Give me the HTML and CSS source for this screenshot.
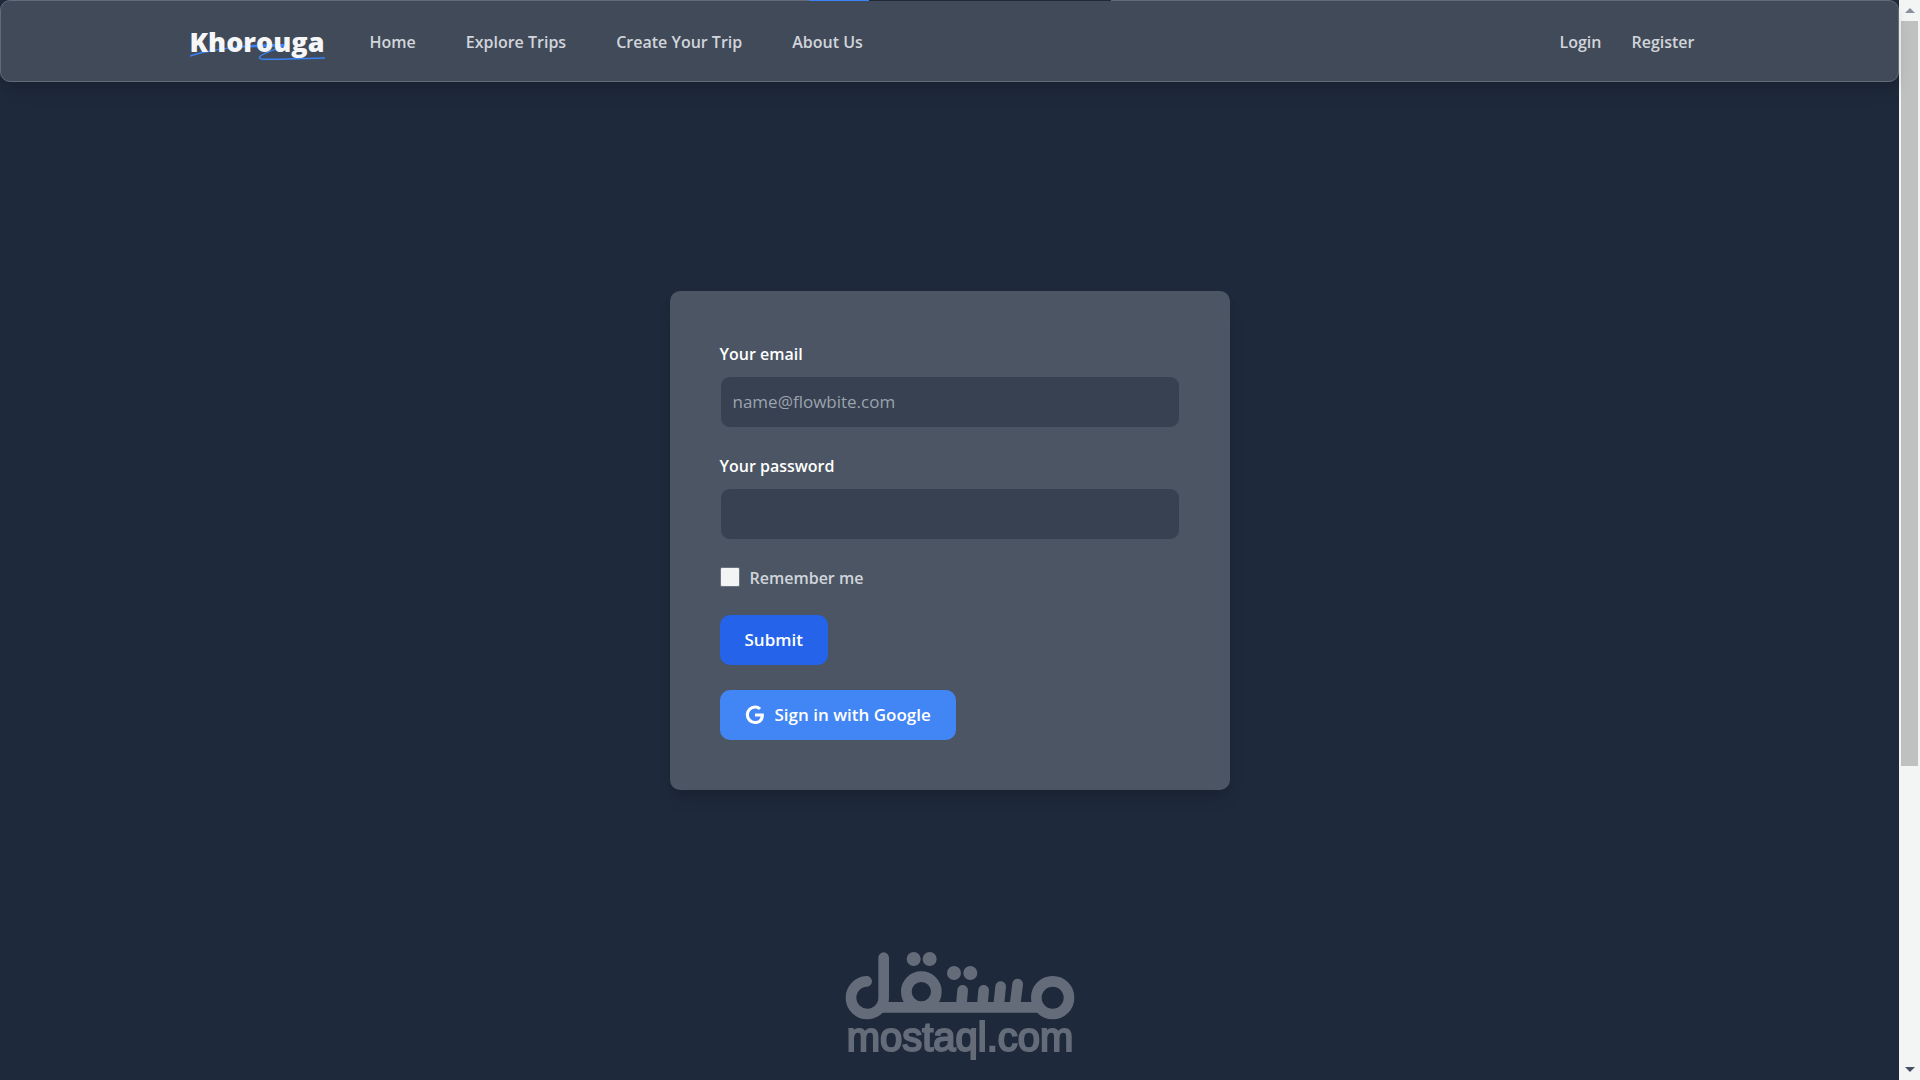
FILE: index.html
```html
<!DOCTYPE html>
<html lang="en">
<head>
    <meta charset="UTF-8">
    <meta name="viewport" content="width=device-width, initial-scale=1.0">
    <title>Khorouga</title>
    <link rel="stylesheet" href="styles.css">
</head>
<body>
    <div class="page">
        <header class="navbar">
            <div class="progress"></div>
            <nav class="nav-container">
                <a href="#" class="logo">
                    <svg class="logo-line" viewBox="0 0 132 18" preserveAspectRatio="none" aria-hidden="true">
                        <path d="M0 14 C22 7 58 3 96 3 C84 5 66 4 44 5 M40 6 C60 3 78 2 94 3 C86 7 70 11 68 15 C67 19 78 17 132 16"/>
                    </svg>
                    <span class="logo-text">Khorouga</span>
                </a>
                <ul class="nav-links">
                    <li><a href="#">Home</a></li>
                    <li><a href="#">Explore Trips</a></li>
                    <li><a href="#">Create Your Trip</a></li>
                    <li><a href="#">About Us</a></li>
                </ul>
                <div class="nav-auth">
                    <a href="#">Login</a>
                    <a href="#">Register</a>
                </div>
            </nav>
        </header>

        <main class="content">
            <form class="login-card">
                <div class="field">
                    <label for="email">Your email</label>
                    <input type="email" id="email" placeholder="name@flowbite.com" required>
                </div>
                <div class="field">
                    <label for="password">Your password</label>
                    <input type="password" id="password" required>
                </div>
                <div class="remember">
                    <input type="checkbox" id="remember">
                    <label for="remember">Remember me</label>
                </div>
                <button type="submit" class="btn btn-submit">Submit</button>
                <button type="button" class="btn btn-google">
                    <svg viewBox="0 0 18 19" aria-hidden="true">
                        <path fill-rule="evenodd" d="M8.842 18.083a8.8 8.8 0 0 1-8.65-8.948 8.841 8.841 0 0 1 8.8-8.652h.153a8.464 8.464 0 0 1 5.7 2.257l-2.193 2.038A5.27 5.27 0 0 0 9.09 3.4a5.882 5.882 0 0 0-.2 11.76h.124a5.091 5.091 0 0 0 5.248-4.057L14.3 11H9V8h8.34c.066.543.095 1.09.088 1.636-.086 5.053-3.463 8.449-8.4 8.449l-.186-.002Z"/>
                    </svg>
                    Sign in with Google
                </button>
            </form>
        </main>
    </div>

    <div class="scrollbar" aria-hidden="true">
        <div class="arrow arrow-up"></div>
        <div class="thumb"></div>
        <div class="arrow arrow-down"></div>
    </div>

    <!-- Watermark -->
    <div class="watermark">
        <svg viewBox="0 0 690 204" aria-hidden="true">
            <g fill="none" stroke-width="32" stroke-linecap="round">
                <path d="M65 88 A49 49 0 1 0 116 136 V17"/>
                <path d="M110 166 H580"/>
                <circle cx="229" cy="119" r="45"/>
                <circle cx="623" cy="137" r="49"/>
                <path d="M353 115 L349 160 M416 115 L412 160 M467 104 L461 160 M518 96 L510 160"/>
            </g>
            <g stroke="none">
                <circle cx="206" cy="21" r="21"/>
                <circle cx="254" cy="21" r="21"/>
                <circle cx="327" cy="63" r="21"/>
                <circle cx="376" cy="63" r="21"/>
            </g>
        </svg>
        <span>mostaql.com</span>
    </div>
</body>
</html>
```

FILE: styles.css
```css
* {
    box-sizing: border-box;
}
body {
    margin: 0;
    min-height: 100vh;
    display: flex;
    background-color: #1e293b;
    color: #d1d5db;
    font-family: "Open Sans", "Noto Sans", sans-serif;
    font-size: 16px;
    line-height: 27px;
}
a {
    color: inherit;
    text-decoration: none;
}
.page {
    flex: 1;
    display: flex;
    flex-direction: column;
}

/* Navbar */
.navbar {
    position: relative;
    padding: 21px 40px 19px;
    background-color: #414a59;
    border: 1px solid #636b78;
    border-radius: 10px;
    box-shadow: 0 12px 18px -4px rgba(0, 0, 0, 0.1), 0 5px 8px -2px rgba(0, 0, 0, 0.1);
}
.progress {
    position: absolute;
    top: -1px;
    left: 50%;
    width: 302px;
    height: 1px;
    margin-left: -141px;
    background: linear-gradient(to right, #3b82f6 20%, #1f2937 20%);
}
.nav-container {
    display: flex;
    align-items: center;
    max-width: 1520px;
    min-height: 40px;
    margin: 0 auto;
    font-weight: 600;
}
.logo {
    position: relative;
    margin-right: 45px;
    color: #f5f6f7;
    font-size: 27px;
    font-weight: 800;
    line-height: 40px;
}
.logo-line {
    position: absolute;
    left: 0;
    bottom: 2px;
    width: 100%;
    height: 18px;
    fill: none;
    stroke: #3b82f6;
    stroke-width: 1.5;
}
.logo-text {
    position: relative;
}
.nav-links {
    display: flex;
    gap: 50px;
    margin: 0;
    padding: 0;
    list-style: none;
}
.nav-auth {
    display: flex;
    gap: 30px;
    margin-left: auto;
    padding-right: 15px;
}

/* Login form */
.content {
    flex: 1;
    display: flex;
    align-items: center;
    justify-content: center;
    padding-bottom: 82px;
}
.login-card {
    display: flex;
    flex-direction: column;
    align-items: flex-start;
    gap: 25px;
    width: 100%;
    max-width: 560px;
    padding: 50px;
    background-color: #4b5563;
    border-radius: 10px;
    box-shadow: 0 12px 18px -4px rgba(0, 0, 0, 0.1), 0 5px 8px -2px rgba(0, 0, 0, 0.1);
}
.field {
    display: flex;
    flex-direction: column;
    gap: 8px;
    width: 100%;
    color: #fff;
    font-weight: 600;
}
.field input {
    width: 100%;
    height: 52px;
    padding: 0 12px;
    background-color: #374151;
    border: 1px solid #4b5563;
    border-radius: 10px;
    color: #fff;
    font: inherit;
    font-size: 17px;
    font-weight: 400;
}
.field input::placeholder {
    color: #9ca3af;
    opacity: 1;
}
.remember {
    display: flex;
    gap: 10px;
    height: 25px;
    font-weight: 600;
}
.remember input {
    appearance: none;
    width: 20px;
    height: 20px;
    margin: 2px 0;
    background-color: #f3f5f5;
    border: 1px solid #6b7280;
    border-radius: 2px;
}
.btn {
    display: flex;
    align-items: center;
    gap: 10px;
    height: 50px;
    padding: 0 25px;
    border: none;
    border-radius: 10px;
    color: #fff;
    font: inherit;
    font-size: 17px;
    font-weight: 600;
    cursor: pointer;
}
.btn-submit {
    background-color: #2563eb;
}
.btn-google {
    background-color: #4285f4;
}
.btn-google svg {
    width: 20px;
    height: 20px;
    fill: currentColor;
}

/* Scrollbar column */
.scrollbar {
    display: flex;
    flex-direction: column;
    align-items: center;
    width: 21px;
    background-color: #f3f5f5;
}
.thumb {
    width: 17px;
    height: 69%;
    background-color: #bfc1c1;
}
.arrow {
    display: flex;
    align-items: center;
    justify-content: center;
    height: 21px;
}
.arrow::before {
    content: "";
    border: 5px solid transparent;
}
.arrow-up::before {
    border-top: none;
    border-bottom-color: #8b8f9b;
}
.arrow-down {
    margin-top: auto;
}
.arrow-down::before {
    border-bottom: none;
    border-top-color: #475063;
}

/* Watermark */
.watermark {
    position: fixed;
    bottom: 26px;
    left: 50%;
    transform: translateX(-50%);
    display: flex;
    flex-direction: column;
    align-items: center;
    color: #656c79;
    font-family: "Liberation Sans", Arial, sans-serif;
    font-size: 40px;
    line-height: 34px;
    -webkit-text-stroke: 2px #656c79;
}
.watermark svg {
    width: 230px;
    height: 68px;
    fill: currentColor;
    stroke: currentColor;
}
```
